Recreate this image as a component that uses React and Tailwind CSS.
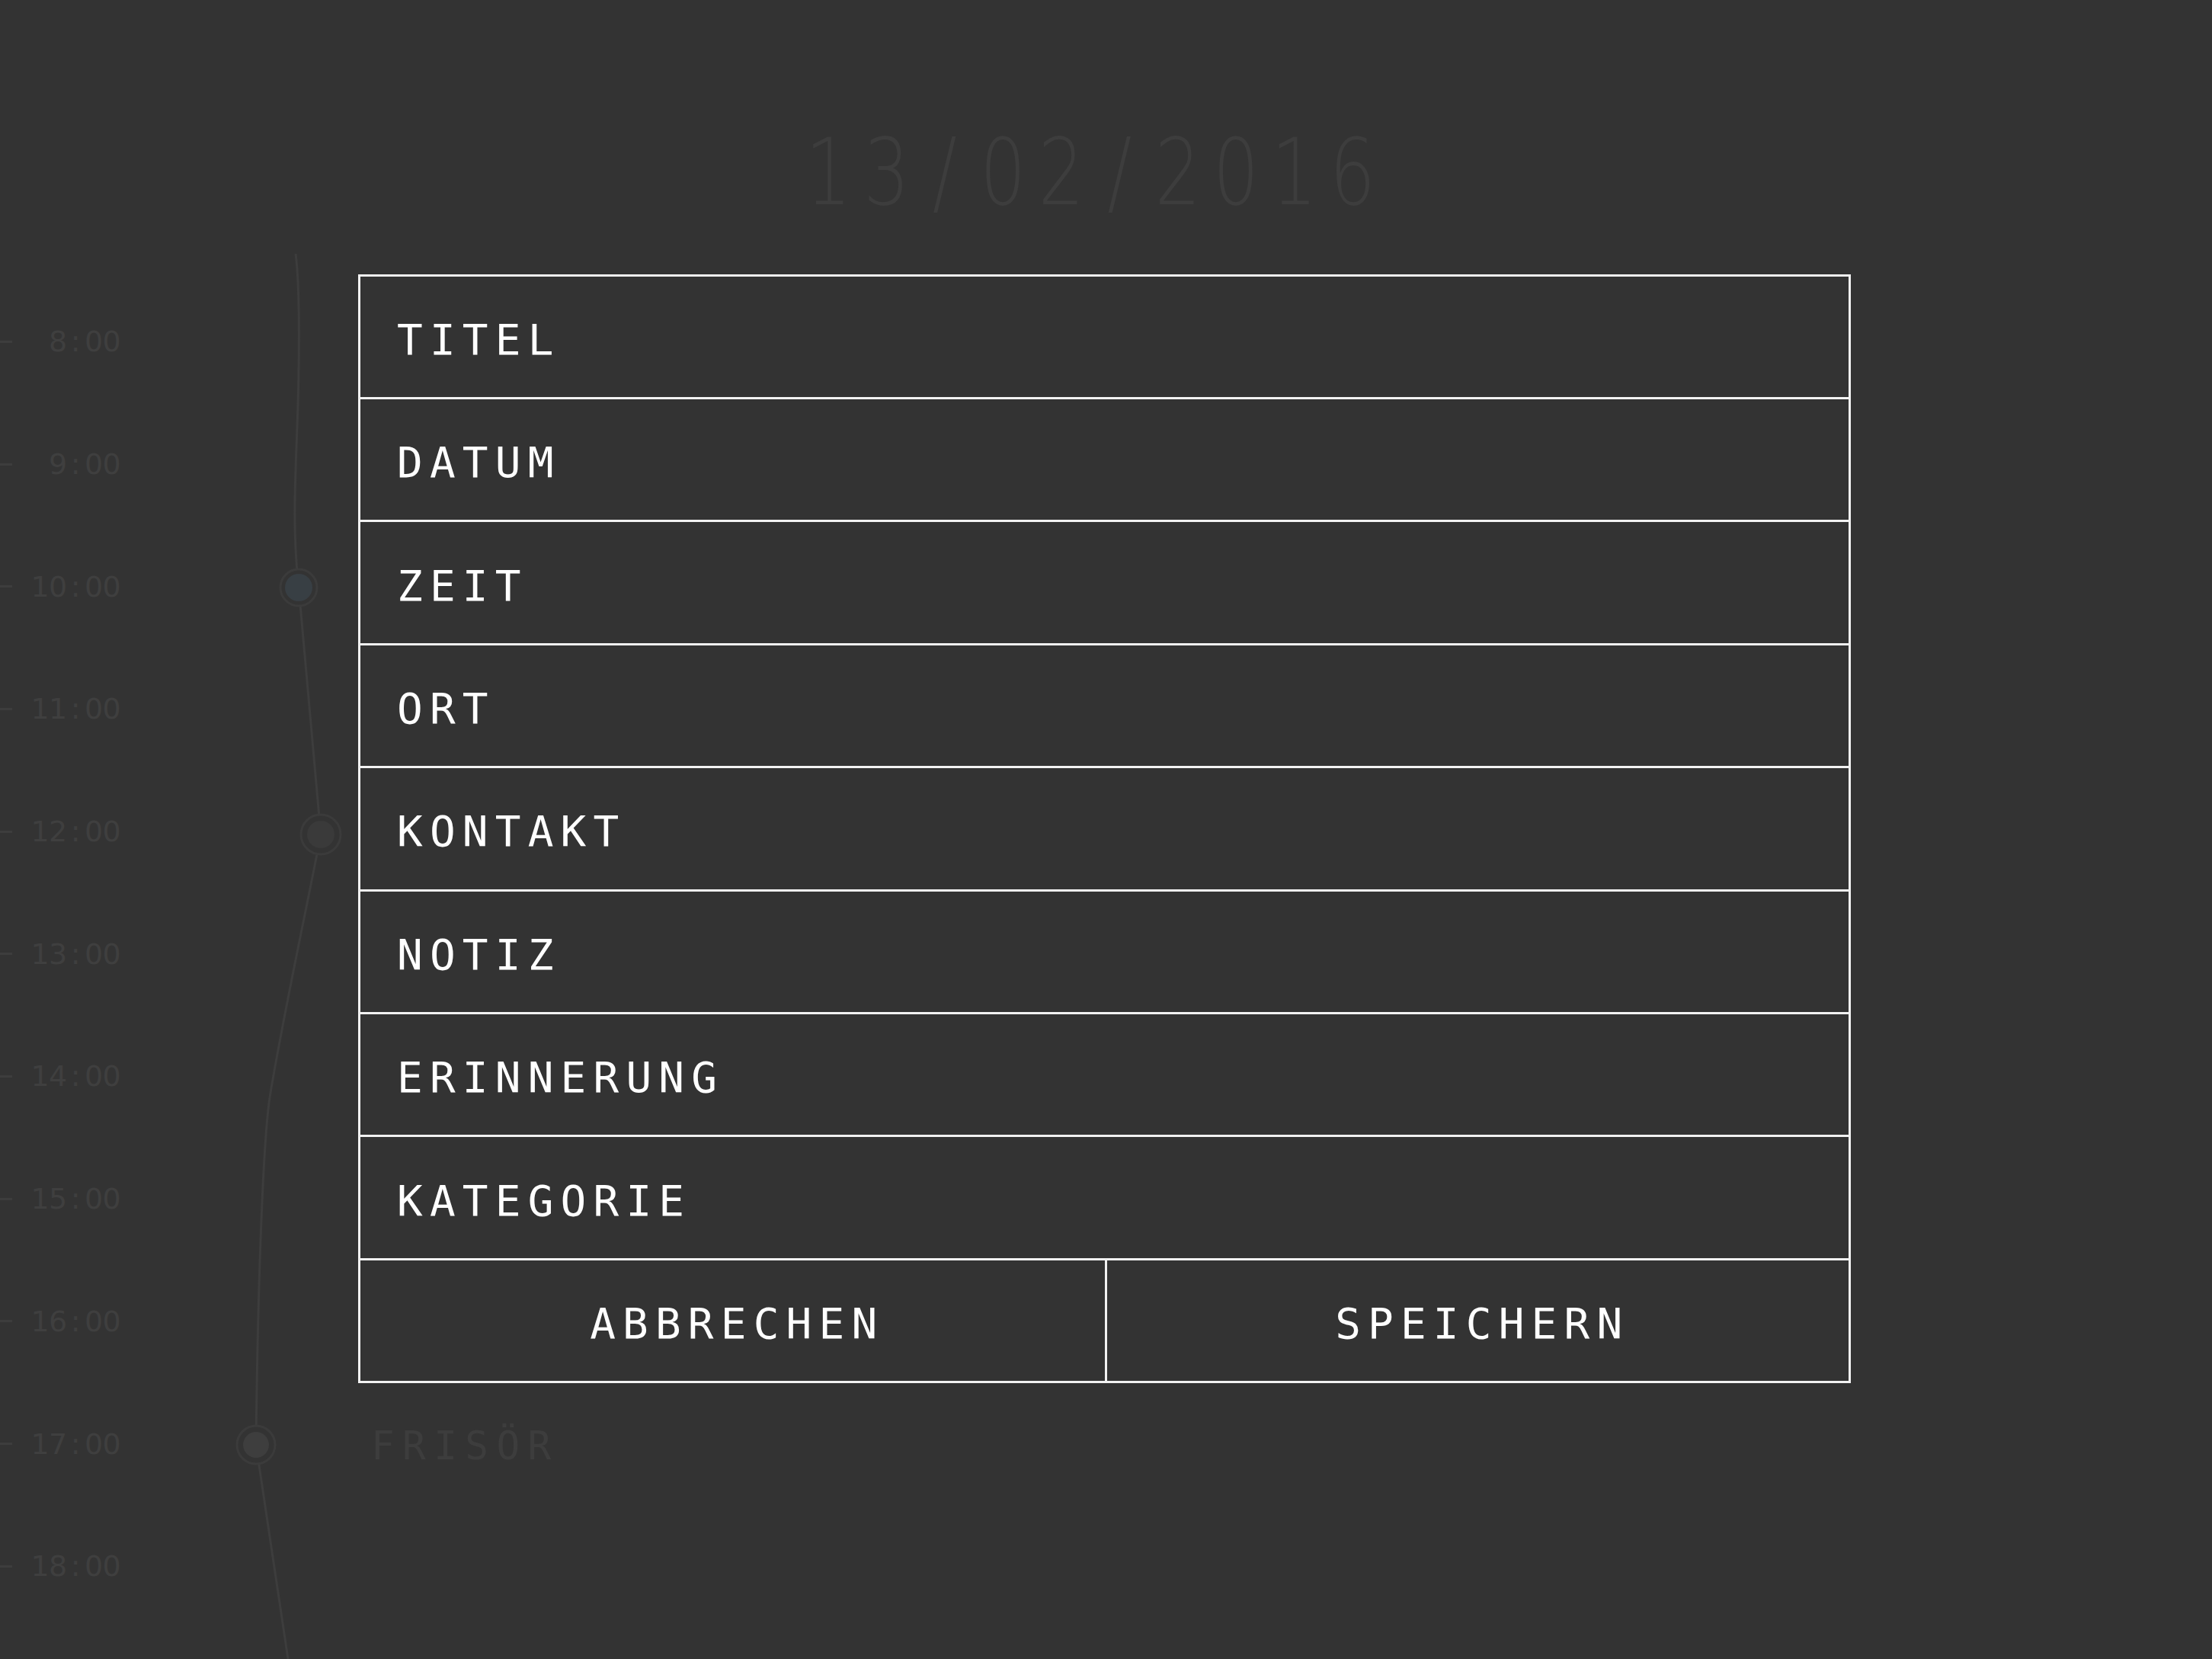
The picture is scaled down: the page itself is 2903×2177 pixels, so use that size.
import React from "react";

const hours = [
  "8:00", "9:00", "10:00", "11:00", "12:00", "13:00",
  "14:00", "15:00", "16:00", "17:00", "18:00",
];

const events = { "17:00": "FRISÖR" };

const fields = [
  "TITEL", "DATUM", "ZEIT", "ORT", "KONTAKT",
  "NOTIZ", "ERINNERUNG", "KATEGORIE",
];

// every character gets a fixed-width cell so the digits read as monospaced
const Cells = ({ text, cell }) =>
  text.split("").map((c, i) => (
    <span key={i} className={"inline-block text-center " + cell}>
      {c}
    </span>
  ));

const Timeline = () => (
  <svg
    className="absolute top-0 left-0 pointer-events-none"
    width="600"
    height="2177"
    viewBox="0 0 600 2177"
  >
    <path
      d="M388 333 C394 380 393 480 390 560 C387 640 384 700 392 771 L421 1095 C405 1180 372 1330 354 1440 C345 1500 338 1700 336 1896 L378 2177"
      fill="none"
      stroke="#3d3d3d"
      strokeWidth="3"
    />
    <circle cx="392" cy="771" r="24" fill="#333333" stroke="#3b3b3b" strokeWidth="3" />
    <circle cx="392" cy="771" r="18" fill="#383f44" />
    <circle cx="421" cy="1095" r="26" fill="#333333" stroke="#3b3b3b" strokeWidth="3" />
    <circle cx="421" cy="1095" r="18" fill="#3a3a3a" />
    <circle cx="336" cy="1896" r="25" fill="#333333" stroke="#3b3b3b" strokeWidth="3" />
    <circle cx="336" cy="1896" r="17" fill="#3e3e3e" />
  </svg>
);

export default function App() {
  return (
    <div className="relative w-[2903px] h-[2177px] bg-[#333333] overflow-hidden font-['DejaVu_Sans_Mono',monospace]">
      <Timeline />

      {/* date header */}
      <div className="relative flex justify-center pt-[165px] pr-[42px]">
        <span className="flex scale-x-[0.78] font-['DejaVu_Sans',sans-serif] font-light text-[122px] leading-none text-[#3d3d3d]">
          <Cells text="13/02/2016" cell="w-[98px]" />
        </span>
      </div>

      {/* hour rows */}
      <div className="relative flex flex-col mt-[81px]">
        {hours.map((h) => (
          <div key={h} className="flex items-center h-[160.7px]">
            <div className="w-[16px] h-[3px] bg-[#3d3d3d]" />
            <div className="w-[142px] flex justify-end font-['DejaVu_Sans',sans-serif] text-[38px] leading-none text-[#3f3f3f]">
              <Cells text={h} cell="w-[23.5px]" />
            </div>
            {events[h] && (
              <div className="ml-[329px] mt-[6px] text-[51px] leading-none tracking-[10.4px] text-[#3d3d3d]">
                {events[h]}
              </div>
            )}
          </div>
        ))}
      </div>

      {/* new appointment dialog */}
      <div className="absolute left-[470px] top-[360px] w-[1959px] border-[3px] border-[#f2f2f2] bg-[#333333] flex flex-col">
        {fields.map((f, i) => (
          <div
            key={f}
            className={
              "flex items-center pl-[48px] pt-[8px] text-[56px] leading-none tracking-[9.2px] text-white " +
              (i > 0 ? "h-[161.4px] border-t-[3px] border-[#f2f2f2]" : "h-[158px]")
            }
          >
            {f}
          </div>
        ))}
        <div className="grid grid-cols-2 h-[161.4px] border-t-[3px] border-[#f2f2f2] text-[56px] leading-none tracking-[9.2px] text-white">
          <button className="flex items-center justify-center pl-[12px] pt-[8px]">
            ABBRECHEN
          </button>
          <button className="flex items-center justify-center pl-[12px] pt-[8px] border-l-[3px] border-[#f2f2f2]">
            SPEICHERN
          </button>
        </div>
      </div>
    </div>
  );
}
